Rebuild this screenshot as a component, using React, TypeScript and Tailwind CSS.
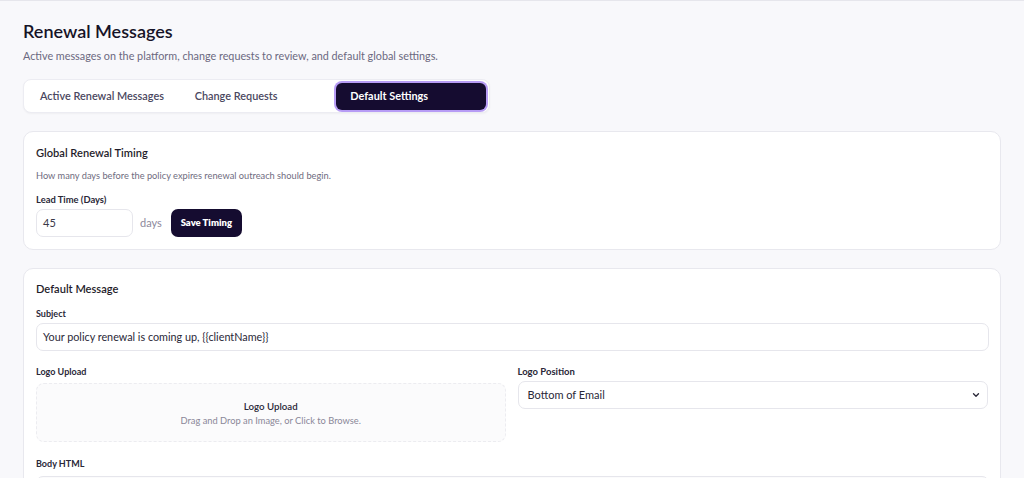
import React from "react";

export default function App() {
  return (
    <div
      className="min-h-[478px] w-full bg-[#f8f8fb] border-t border-[#e6e6ec] overflow-hidden"
      style={{ fontFamily: 'Lato, "Noto Sans", sans-serif' }}
    >
      <div className="pl-[23px] pr-[23px] pt-[18px]">
        <h1 className="text-[18px] leading-[24px] font-semibold text-[#161327]">Renewal Messages</h1>
        <p className="mt-[5px] text-[10.8px] leading-[16px] text-[#6b6880]">
          Active messages on the platform, change requests to review, and default global settings.
        </p>

        <div className="mt-[15px] w-[467px] h-[34px] rounded-[8px] bg-white border border-[#ececf2] shadow-[0_1px_2px_rgba(0,0,0,0.04)] flex items-center px-[3px]">
          <div className="w-[156px] h-[27px] flex items-center pl-[13px] text-[10.9px] font-semibold text-[#4a4760]">Active Renewal Messages</div>
          <div className="w-[156px] h-[27px] flex items-center pl-[13px] text-[10.9px] font-semibold text-[#4a4760]">Change Requests</div>
          <div className="w-[151px] h-[27px] flex items-center pl-[14px] text-[10.9px] font-bold text-white bg-[#150c30] rounded-[6px] ring-2 ring-[#b79cf5]">Default Settings</div>
        </div>

        <div className="mt-[18px] w-[978px] rounded-[10px] bg-white border border-[#e8e8ee] px-[12px] pt-[13px] pb-[12px]">
          <div className="text-[11.1px] leading-[16px] font-semibold text-[#1f1d2b]">Global Renewal Timing</div>
          <div className="mt-[9px] text-[9.25px] leading-[12px] text-[#6f6c80]">How many days before the policy expires renewal outreach should begin.</div>
          <div className="mt-[12px] text-[9.4px] leading-[12px] font-bold text-[#2a2838]">Lead Time (Days)</div>
          <div className="mt-[3px] flex items-center">
            <div className="w-[97px] h-[28px] rounded-[7px] border border-[#e6e6ec] flex items-center pl-[6px] text-[11px] text-[#3a3848]">45</div>
            <div className="ml-[7px] text-[11px] text-[#8d8a9c]">days</div>
            <div className="ml-[9px] w-[71px] h-[28px] rounded-[7px] bg-[#150c30] flex items-center justify-center text-[9.5px] font-extrabold text-white">Save Timing</div>
          </div>
        </div>

        <div className="mt-[18px] w-[978px] rounded-[10px] bg-white border border-[#e8e8ee] px-[12px] pt-[12px] pb-[10px]">
          <div className="text-[11.1px] leading-[16px] font-semibold text-[#1f1d2b]">Default Message</div>
          <div className="mt-[11px] text-[9px] leading-[12px] font-bold text-[#2a2838]">Subject</div>
          <div className="mt-[3px] w-[953px] h-[28px] rounded-[7px] border border-[#e6e6ec] flex items-center pl-[6px] text-[10.8px] text-[#2a2838]">Your policy renewal is coming up, {"{{clientName}}"}</div>

          <div className="mt-[15px] flex gap-[12px]">
            <div className="w-[470px]">
              <div className="text-[9px] leading-[12px] font-bold text-[#2a2838]">Logo Upload</div>
              <div className="mt-[5px] h-[59px] rounded-[8px] border border-dashed border-[#ececf0] bg-[#fbfbfc] flex flex-col items-center justify-center">
                <div className="text-[9.7px] leading-[12px] font-semibold text-[#2a2838]">Logo Upload</div>
                <div className="mt-[3px] text-[9.3px] leading-[11px] text-[#8a8798]">Drag and Drop an Image, or Click to Browse.</div>
              </div>
            </div>
            <div className="w-[471px]">
              <div className="text-[9.5px] leading-[12px] font-bold text-[#2a2838]">Logo Position</div>
              <div className="mt-[3px] h-[28px] rounded-[7px] border border-[#e6e6ec] flex items-center justify-between pl-[9px] pr-[6px] text-[11px] text-[#2a2838]">
                <span>Bottom of Email</span>
                <svg width="10" height="10" viewBox="0 0 24 24" fill="none" stroke="#2a2838" strokeWidth="3.2" strokeLinecap="round" strokeLinejoin="round"><path d="M6 9l6 6 6-6" /></svg>
              </div>
            </div>
          </div>

          <div className="mt-[16px] text-[9px] leading-[12px] font-bold text-[#2a2838]">Body HTML</div>
          <div className="mt-[6px] w-[953px] h-[40px] rounded-[7px] border border-[#e6e6ec] bg-[#fbfbfc]"></div>
        </div>
      </div>
    </div>
  );
}
